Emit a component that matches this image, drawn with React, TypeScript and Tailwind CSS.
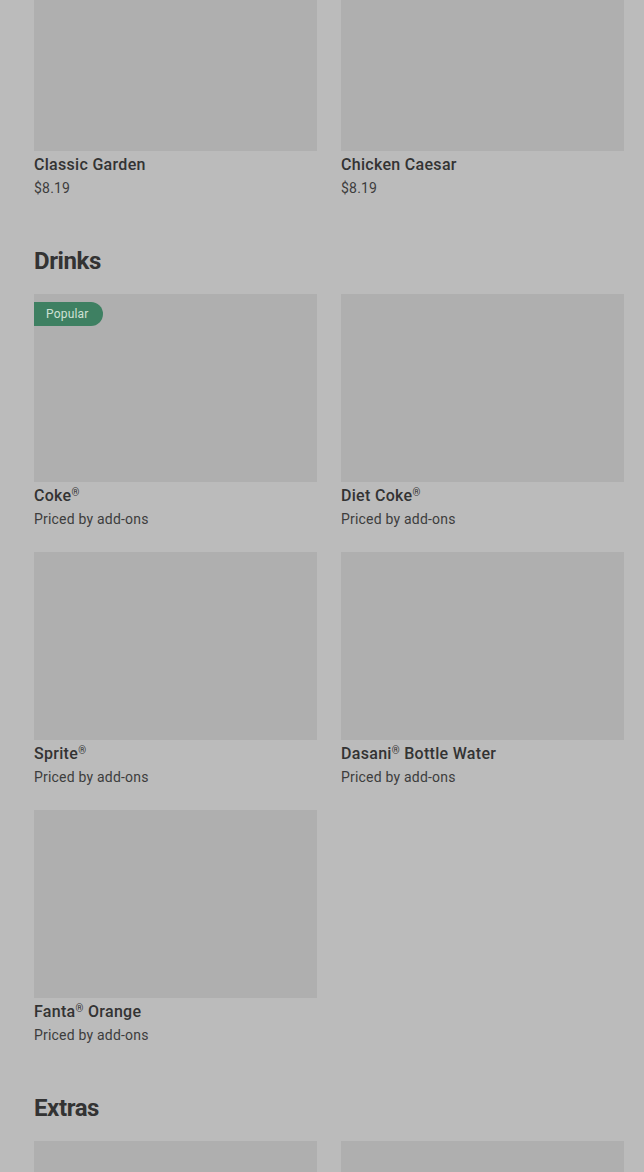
import React from "react";

type Item = { name: string; price: string; popular?: boolean };

const sections: { title?: string; items: Item[]; cut?: boolean }[] = [
  {
    items: [
      { name: "Classic Garden", price: "$8.19" },
      { name: "Chicken Caesar", price: "$8.19" },
    ],
  },
  {
    title: "Drinks",
    items: [
      { name: "Coke®", price: "Priced by add-ons", popular: true },
      { name: "Diet Coke®", price: "Priced by add-ons" },
      { name: "Sprite®", price: "Priced by add-ons" },
      { name: "Dasani® Bottle Water", price: "Priced by add-ons" },
      { name: "Fanta® Orange", price: "Priced by add-ons" },
    ],
  },
  {
    // only the top of this row is on screen
    title: "Extras",
    cut: true,
    items: [
      { name: "Chips", price: "$1.99" },
      { name: "Cookie", price: "$1.99" },
    ],
  },
];

// small raised ® like the menu uses
function Name({ text }: { text: string }) {
  const parts = text.split("®");
  return (
    <>
      {parts.map((p, i) => (
        <React.Fragment key={i}>
          {p}
          {i < parts.length - 1 && <span className="text-[10px] align-[5px] leading-none">®</span>}
        </React.Fragment>
      ))}
    </>
  );
}

function Card({ item, cut }: { item: Item; cut?: boolean }) {
  return (
    <div>
      <div className="relative h-[188px] bg-[#afafaf]">
        {item.popular && (
          <span className="absolute left-0 top-2 h-6 pl-3 pr-[14px] flex items-center rounded-r-full bg-[#3e8062] text-[12px] tracking-[0.2px] text-[#cfe0d5]">
            Popular
          </span>
        )}
      </div>
      {!cut && (
        <>
          <div className="mt-1 text-[16px] leading-5 font-medium tracking-[0.3px] text-[#333333]">
            <Name text={item.name} />
          </div>
          <div className="mt-[3px] text-[14px] leading-5 tracking-[0.2px] text-[#3d3d3d]">{item.price}</div>
        </>
      )}
    </div>
  );
}

export default function App() {
  return (
    <div
      className="min-h-screen h-[1172px] overflow-hidden bg-[#bbbbbb] pl-[34px] pr-5"
      style={{ fontFamily: "Roboto, 'Noto Sans', sans-serif" }}
    >
      <div className="-mt-[37px]">
        {sections.map((s, i) => (
          <section key={i} className={i > 0 ? "mt-[47px]" : ""}>
            {s.title && (
              <h2 className="text-[24px] leading-8 font-bold text-[#333333] mb-[17px] tracking-[-0.4px]">
                {s.title}
              </h2>
            )}
            <div className="grid grid-cols-2 gap-x-6 gap-y-[23px]">
              {s.items.map((it) => (
                <Card key={it.name} item={it} cut={s.cut} />
              ))}
            </div>
          </section>
        ))}
      </div>
    </div>
  );
}
